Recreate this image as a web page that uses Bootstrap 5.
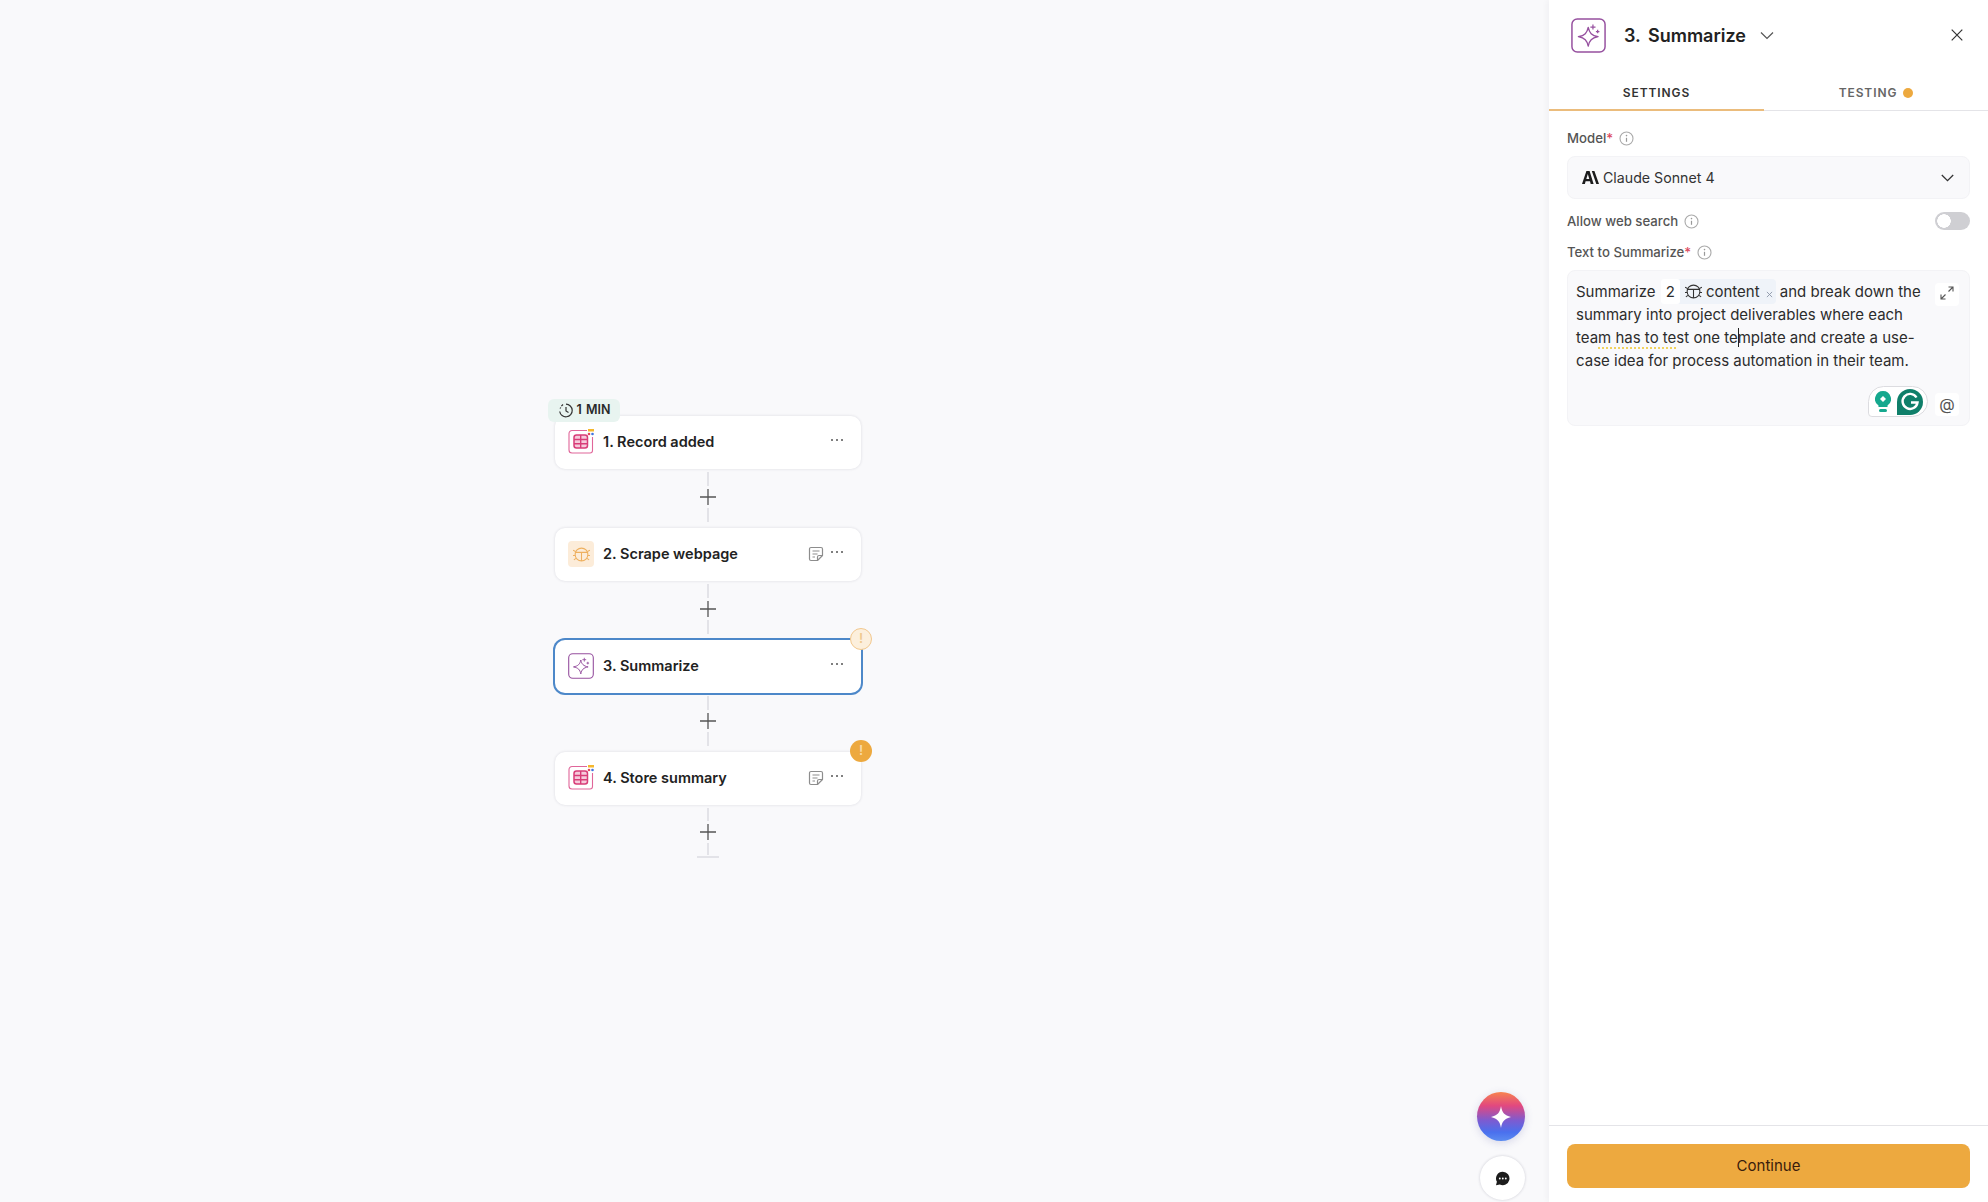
<!DOCTYPE html>
<html lang="en">
<head>
  <meta charset="UTF-8" />
  <meta name="viewport" content="width=device-width, initial-scale=1.0"/>
  <title>Summarize</title>
  <link href="https://cdn.jsdelivr.net/npm/bootstrap@5.3.0/dist/css/bootstrap.min.css" rel="stylesheet">
  <style>
    html, body { height: 100%; }
    body { font-family: Inter, "Liberation Sans", sans-serif; background: #f9f9fb; color: #222; overflow: hidden; }
    .app-shell { height: 1202px; position: relative; }

    /* canvas with the steps */
    .canvas-pane { width: 1549px; padding: 416px 0 0 555px; }
    .flow-col { width: 306px; }
    .step-card { height: 53px; border: 0; border-radius: 10px; padding: 0 17px 0 13px; box-shadow: 0 0 3px rgba(30,30,60,.14); position: relative; }
    .step-card.is-active { box-shadow: 0 0 0 2px #4d88c9; }
    .step-title { font-size: 14.5px; font-weight: 600; color: #222; margin: -2px 0 0 9px; }
    .step-icon { width: 26px; height: 26px; flex: none; display: block; margin-top: -1px; }
    .doc-icon { width: 16px; height: 16px; margin-right: 6px; margin-top: -1px; }
    .dots-icon { width: 14px; height: 4px; margin-top: -6px; }
    .time-badge { position: absolute; left: -7px; top: -17px; height: 23px; width: 72px; background: #e8f4f0; border-radius: 6px; font-size: 12.5px; font-weight: 600; color: #2a2a2a; gap: 4px; word-spacing: 1px; }
    .warn-dot { position: absolute; right: -11px; top: -12px; width: 22px; height: 22px; border-radius: 50%; font-size: 13px; font-weight: 600; }
    .warn-light { background: #fcefdc; border: 1px solid #f2c88e; color: #efc98f; right: -11px; top: -12px; }
    .warn-solid { background: #eda93f; color: #f8dba8; }
    .step-link { height: 59px; padding-bottom: 3px; }
    .step-link.is-last { height: 53px; padding-bottom: 0; }
    .step-dash { width: 2px; flex: 1; background: #e3e3e8; margin: 3px 0; }
    .step-end { width: 22px; height: 2px; background: #e3e3e8; margin-top: -2px; }
    .plus-icon { width: 16px; height: 16px; flex: none; }

    /* floating buttons */
    .fab-ai { position: absolute; left: 1477px; top: 1092px; width: 48px; height: 49px; border-radius: 50%; background: linear-gradient(180deg, #f7834f 0%, #e2487f 28%, #7d5bd0 58%, #4a70ee 82%, #5c8cf0 100%); box-shadow: 0 2px 8px rgba(80,80,160,.2); }
    .fab-chat { position: absolute; left: 1480px; top: 1156px; width: 45px; height: 44px; border-radius: 50%; background: #fff; box-shadow: 0 0 3px rgba(30,30,60,.2); }

    /* right panel */
    .side-panel { position: absolute; left: 1549px; top: 0; width: 439px; height: 1202px; background: #fff; box-shadow: -2px 0 6px rgba(30,30,60,.04); }
    .panel-head { height: 70px; padding: 0 18px 0 22px; }
    .head-icon { width: 35px; height: 35px; }
    .head-title { font-size: 18px; font-weight: 600; color: #222; margin-left: 18px; word-spacing: 3px; }
    .head-chevron { margin-left: 14px; }
    .close-btn { width: 26px; height: 26px; }
    .tab-row { height: 41px; border-bottom: 1px solid #e4e4e8; }
    .tab-item { font-size: 12px; font-weight: 600; letter-spacing: .9px; text-transform: uppercase; color: #666; padding-top: 5px; margin-bottom: -1px; }
    .tab-item.is-on { width: 215px; color: #333; border-bottom: 2px solid #ebbc7c; padding-top: 7px; }
    .tab-dot { width: 10px; height: 10px; border-radius: 50%; background: #eda93f; margin-left: 6px; }
    .panel-body { padding: 18px 18px 0 18px; }
    .field-label { font-size: 13.2px; font-weight: 500; color: #555; line-height: 18px; }
    .req-mark { color: #dc4a5e; }
    .info-icon { width: 15px; height: 15px; margin-left: 6px; }
    .model-box { height: 43px; margin-top: 9px; padding: 0 15px 0 14px; background: #f9f9fb; border: 1px solid #f3f3f6; border-radius: 8px; font-size: 14.2px; color: #333; }
    .model-logo { width: 17px; height: 13px; margin-right: 4px; }
    .web-row { margin-top: 13px; height: 18px; }
    .form-switch .web-toggle { width: 35px; height: 18px; margin: 0; border: 0; background-color: #cfcfd3; background-image: radial-gradient(circle at 9px 50%, #fff 6.5px, transparent 7px); }
    .web-switch { padding: 0; margin: 0; min-height: 0; line-height: 0; }
    .text-label { margin-top: 13px; }
    .prompt-box { position: relative; height: 156px; margin-top: 9px; padding: 9px 34px 0 8px; background: #f9f9fb; border: 1px solid #f3f3f6; border-radius: 8px; font-size: 15px; line-height: 23px; color: #2c2c2c; }
    .var-chip { background: #eff3f9; border-radius: 4px; padding: 3px 3px 3px 0; margin-left: 1px; }
    .var-num { background: #fff; border-radius: 3px; padding: 3px 5px; }
    .bug-inline { width: 17px; height: 17px; vertical-align: -3px; margin: 0 4px 0 5px; color: #333; }
    .var-x { width: 7px; height: 7px; margin-left: 6px; vertical-align: -1px; }
    .lint-mark { text-decoration: underline dotted #f0d260 2px; text-underline-offset: 4px; }
    .caret-mark { border-left: 1px solid #222; margin-right: -1px; }
    .mini-btn { position: absolute; width: 24px; height: 23px; background: #fff; border-radius: 4px; }
    .mini-btn svg { width: 14px; height: 14px; }
    .expand-btn { right: 10px; top: 12px; padding-bottom: 3px; }
    .at-btn { right: 10px; bottom: 9px; font-size: 16px; color: #555; }
    .gram-widget { position: absolute; left: 300px; top: 115px; width: 60px; height: 31px; background: #fff; border: 1px solid #dcdce0; border-radius: 16px 16px 16px 4px; gap: 6px; padding-left: 2px; }
    .gram-bulb { width: 16px; height: 22px; }
    .gram-logo { width: 26px; height: 26px; }
    .panel-foot { border-top: 1px solid #e4e4e8; padding: 18px 18px 14px 18px; }
    .continue-btn { height: 44px; background: #eda93f; border: 0; border-radius: 8px; font-size: 15px; color: #3a1c0c; }
    .continue-btn:hover { background: #eda93f; color: #3a1c0c; }
  </style>
</head>
<body>

<svg width="0" height="0" class="position-absolute">
  <symbol id="tableIcon" viewBox="0 0 26 26">
    <path d="M19 1.500H4A3 3 0 0 0 1 4.500V21a3 3 0 0 0 3 3h18a2.500 2.500 0 0 0 2.500-2.500V8" fill="none" stroke="#e0669a" stroke-width="1.100"/>
    <rect x="6" y="6" width="13.500" height="13" rx="2.500" fill="#f6cadb" stroke="#d83c78" stroke-width="1.500"/>
    <path d="M12.700 6v13M6 10.500h13.500M6 14.800h13.500" stroke="#d83c78" stroke-width="1.400"/>
    <rect x="20" y="0" width="6" height="2.500" fill="#f5b82e"/>
    <circle cx="21" cy="5" r="1.300" fill="#e2475f"/>
    <circle cx="24.500" cy="5" r="1.300" fill="#3f74e0"/>
  </symbol>
  <symbol id="sparkIcon" viewBox="0 0 26 26">
    <rect x=".7" y=".7" width="24.600" height="24.600" rx="4" fill="#fff" stroke="#96509f" stroke-width="1.100"/>
    <path d="M12.800 7c.9 4.200 2.500 5.900 7.300 6.900-4.800 1-6.400 2.700-7.300 7-.9-4.300-2.500-6-7.300-7 4.800-1 6.400-2.700 7.300-6.900z" fill="none" stroke="#96509f" stroke-width="1" stroke-linejoin="round"/>
    <path d="M16.300 4.800v3.800M14.400 6.700h3.800M19.800 8.800v2.600M18.500 10.100h2.600" stroke="#96509f" stroke-width=".9" fill="none"/>
  </symbol>
  <symbol id="bugIcon" viewBox="0 0 16 16">
    <circle cx="8" cy="8" r="6" fill="none" stroke="currentColor" stroke-width="1"/>
    <path d="M2.400 6h11.200M8 6v8M0 4l2.400 1.200M16 4l-2.400 1.200M0 9h2M16 9h-2M.8 13l2-1.400M15.200 13l-2-1.400" fill="none" stroke="currentColor" stroke-width="1"/>
  </symbol>
  <symbol id="docIcon" viewBox="0 0 16 16">
    <path d="M9.500 14.500H3A1.500 1.500 0 0 1 1.500 13V3A1.500 1.500 0 0 1 3 1.500h10A1.500 1.500 0 0 1 14.500 3v6.500zM9.500 14.500V11a1.500 1.500 0 0 1 1.500-1.500h3.500M4.500 5h7M4.500 8h5M4.500 11h2.500" fill="none" stroke="#8d8d8d" stroke-width="1.200" stroke-linejoin="round"/>
  </symbol>
  <symbol id="dotsIcon" viewBox="0 0 14 4">
    <circle cx="2" cy="2" r="1" fill="#555"/><circle cx="7" cy="2" r="1" fill="#555"/><circle cx="12" cy="2" r="1" fill="#555"/>
  </symbol>
  <symbol id="plusIcon" viewBox="0 0 16 16">
    <path d="M8 0v16M0 8h16" stroke="#555" stroke-width="1.300" fill="none"/>
  </symbol>
  <symbol id="infoIcon" viewBox="0 0 15 15">
    <circle cx="7.500" cy="7.500" r="6.500" fill="none" stroke="#aaa" stroke-width="1.100"/>
    <path d="M7.500 6.800v4" stroke="#999" stroke-width="1.200"/><circle cx="7.500" cy="4.600" r=".8" fill="#999"/>
  </symbol>
</svg>

<div class="app-shell">

  <!-- Steps -->
  <div class="canvas-pane">
    <div class="flow-col d-flex flex-column align-items-center">

      <div class="card step-card w-100 d-flex flex-row align-items-center">
        <div class="time-badge d-flex align-items-center justify-content-center">
          <svg width="15" height="15" viewBox="0 0 15 15"><path d="M8 1.200A6.300 6.300 0 1 1 1.700 8.500M8 4v4l2.500 1.500M3.400 3.200 5 1.500M2 5.500l.8-1" fill="none" stroke="#333" stroke-width="1.200"/></svg>
          <span>1 MIN</span>
        </div>
        <svg class="step-icon"><use href="#tableIcon"/></svg>
        <span class="step-title">1. Record added</span>
        <svg class="dots-icon ms-auto"><use href="#dotsIcon"/></svg>
      </div>

      <div class="step-link d-flex flex-column align-items-center"><span class="step-dash"></span><svg class="plus-icon"><use href="#plusIcon"/></svg><span class="step-dash"></span></div>

      <div class="card step-card w-100 d-flex flex-row align-items-center">
        <span class="step-icon d-flex align-items-center justify-content-center rounded-1" style="background:#fcecd9;color:#eeb05f"><svg width="17" height="17"><use href="#bugIcon"/></svg></span>
        <span class="step-title">2. Scrape webpage</span>
        <svg class="doc-icon ms-auto"><use href="#docIcon"/></svg>
        <svg class="dots-icon"><use href="#dotsIcon"/></svg>
      </div>

      <div class="step-link d-flex flex-column align-items-center"><span class="step-dash"></span><svg class="plus-icon"><use href="#plusIcon"/></svg><span class="step-dash"></span></div>

      <div class="card step-card is-active w-100 d-flex flex-row align-items-center">
        <span class="warn-dot warn-light d-flex align-items-center justify-content-center">!</span>
        <svg class="step-icon"><use href="#sparkIcon"/></svg>
        <span class="step-title">3. Summarize</span>
        <svg class="dots-icon ms-auto"><use href="#dotsIcon"/></svg>
      </div>

      <div class="step-link d-flex flex-column align-items-center"><span class="step-dash"></span><svg class="plus-icon"><use href="#plusIcon"/></svg><span class="step-dash"></span></div>

      <div class="card step-card w-100 d-flex flex-row align-items-center">
        <span class="warn-dot warn-solid d-flex align-items-center justify-content-center">!</span>
        <svg class="step-icon"><use href="#tableIcon"/></svg>
        <span class="step-title">4. Store summary</span>
        <svg class="doc-icon ms-auto"><use href="#docIcon"/></svg>
        <svg class="dots-icon"><use href="#dotsIcon"/></svg>
      </div>

      <div class="step-link is-last d-flex flex-column align-items-center"><span class="step-dash"></span><svg class="plus-icon"><use href="#plusIcon"/></svg><span class="step-dash"></span></div>
      <span class="step-end"></span>
    </div>
  </div>

  <!-- Floating buttons -->
  <div class="fab-ai d-flex align-items-center justify-content-center">
    <svg width="20" height="22" viewBox="0 0 20 22"><path d="M10 0c1 6.500 3.500 9.500 10 11-6.500 1.500-9 4.500-10 11-1-6.500-3.500-9.500-10-11C6.500 9.500 9 6.500 10 0z" fill="#fff"/></svg>
  </div>
  <div class="fab-chat d-flex align-items-center justify-content-center">
    <svg width="15" height="15" viewBox="0 0 15 15"><path d="M7.800 .8a6.700 6.700 0 1 1-3 12.700L1 14.300l.9-3.500A6.700 6.700 0 0 1 7.800.8z" fill="#1c1c1c"/><circle cx="4.800" cy="7.500" r=".9" fill="#fff"/><circle cx="7.800" cy="7.500" r=".9" fill="#fff"/><circle cx="10.800" cy="7.500" r=".9" fill="#fff"/></svg>
  </div>

  <!-- Settings panel -->
  <aside class="side-panel d-flex flex-column">
    <div class="panel-head d-flex align-items-center">
      <svg class="head-icon"><use href="#sparkIcon"/></svg>
      <span class="head-title">3. Summarize</span>
      <svg class="head-chevron" width="14" height="9" viewBox="0 0 14 9"><path d="M1 1.500 7 7.500l6-6" fill="none" stroke="#555" stroke-width="1.200"/></svg>
      <button type="button" class="close-btn btn p-0 ms-auto d-flex align-items-center justify-content-center border-0">
        <svg width="12" height="12" viewBox="0 0 12 12"><path d="M.7.700l10.600 10.600M11.300.700.700 11.300" stroke="#333" stroke-width="1.200"/></svg>
      </button>
    </div>

    <div class="tab-row d-flex">
      <div class="tab-item is-on d-flex align-items-center justify-content-center">Settings</div>
      <div class="tab-item flex-grow-1 d-flex align-items-center justify-content-center">Testing<span class="tab-dot"></span></div>
    </div>

    <div class="panel-body flex-grow-1">
      <div class="field-label d-flex align-items-center">
        <span>Model<span class="req-mark">*</span></span>
        <svg class="info-icon"><use href="#infoIcon"/></svg>
      </div>
      <div class="model-box d-flex align-items-center">
        <svg class="model-logo" viewBox="0 0 17 13"><path d="M4.400 0h3.200l4 13H8.700l-.7-2.700H3.600L2.900 13H0zM4.300 8h3L5.800 3zM9.800 0h2.600L17 13h-2.700z" fill="#1c1c1c"/></svg>
        <span>Claude Sonnet 4</span>
        <svg class="ms-auto" width="13" height="8" viewBox="0 0 13 8"><path d="M.8 1l5.700 5.700L12.200 1" fill="none" stroke="#333" stroke-width="1.300"/></svg>
      </div>

      <div class="web-row d-flex align-items-center">
        <span class="field-label">Allow web search</span>
        <svg class="info-icon"><use href="#infoIcon"/></svg>
        <div class="form-check form-switch web-switch ms-auto">
          <input class="form-check-input web-toggle" type="checkbox" role="switch">
        </div>
      </div>

      <div class="field-label text-label d-flex align-items-center">
        <span>Text to Summarize<span class="req-mark">*</span></span>
        <svg class="info-icon"><use href="#infoIcon"/></svg>
      </div>

      <div class="prompt-box">
        Summarize <span class="var-chip"><span class="var-num">2</span><svg class="bug-inline"><use href="#bugIcon"/></svg>content<svg class="var-x" viewBox="0 0 8 8"><path d="M1 1l6 6M7 1 1 7" stroke="#8a94a6" stroke-width="1"/></svg></span> and break down the summary into project deliverables where each tea<span class="lint-mark">m has to te</span>st one te<span class="caret-mark"></span>mplate and create a use-case idea for process automation in their team.
        <span class="mini-btn expand-btn d-flex align-items-center justify-content-center">
          <svg viewBox="0 0 14 14"><path d="M8.500 1H13v4.500M13 1 8.500 5.500M5.500 13H1V8.500M1 13l4.500-4.500" fill="none" stroke="#555" stroke-width="1.100"/></svg>
        </span>
        <span class="gram-widget d-flex align-items-center justify-content-center">
          <svg class="gram-bulb" viewBox="0 0 16 22"><path d="M8 0a8 8 0 0 1 4.500 14.600V16h-9v-1.400A8 8 0 0 1 8 0z" fill="#15a88e"/><path d="M8 5l3 3-3 3-3-3z" fill="#fff"/><rect x="4" y="18" width="8" height="3" rx="1.500" fill="#15a88e"/></svg>
          <svg class="gram-logo" viewBox="0 0 26 26"><path d="M13 0a13 13 0 1 1 0 26H0V13A13 13 0 0 1 13 0z" fill="#0f7f6a"/><path d="M19.500 8.500a7.500 7.500 0 1 0 1 5H14" fill="none" stroke="#fff" stroke-width="2.400"/></svg>
        </span>
        <span class="mini-btn at-btn d-flex align-items-center justify-content-center">@</span>
      </div>
    </div>

    <div class="panel-foot">
      <button type="button" class="btn continue-btn w-100">Continue</button>
    </div>
  </aside>
</div>

<script src="https://cdn.jsdelivr.net/npm/bootstrap@5.3.0/dist/js/bootstrap.bundle.min.js"></script>
</body>
</html>
